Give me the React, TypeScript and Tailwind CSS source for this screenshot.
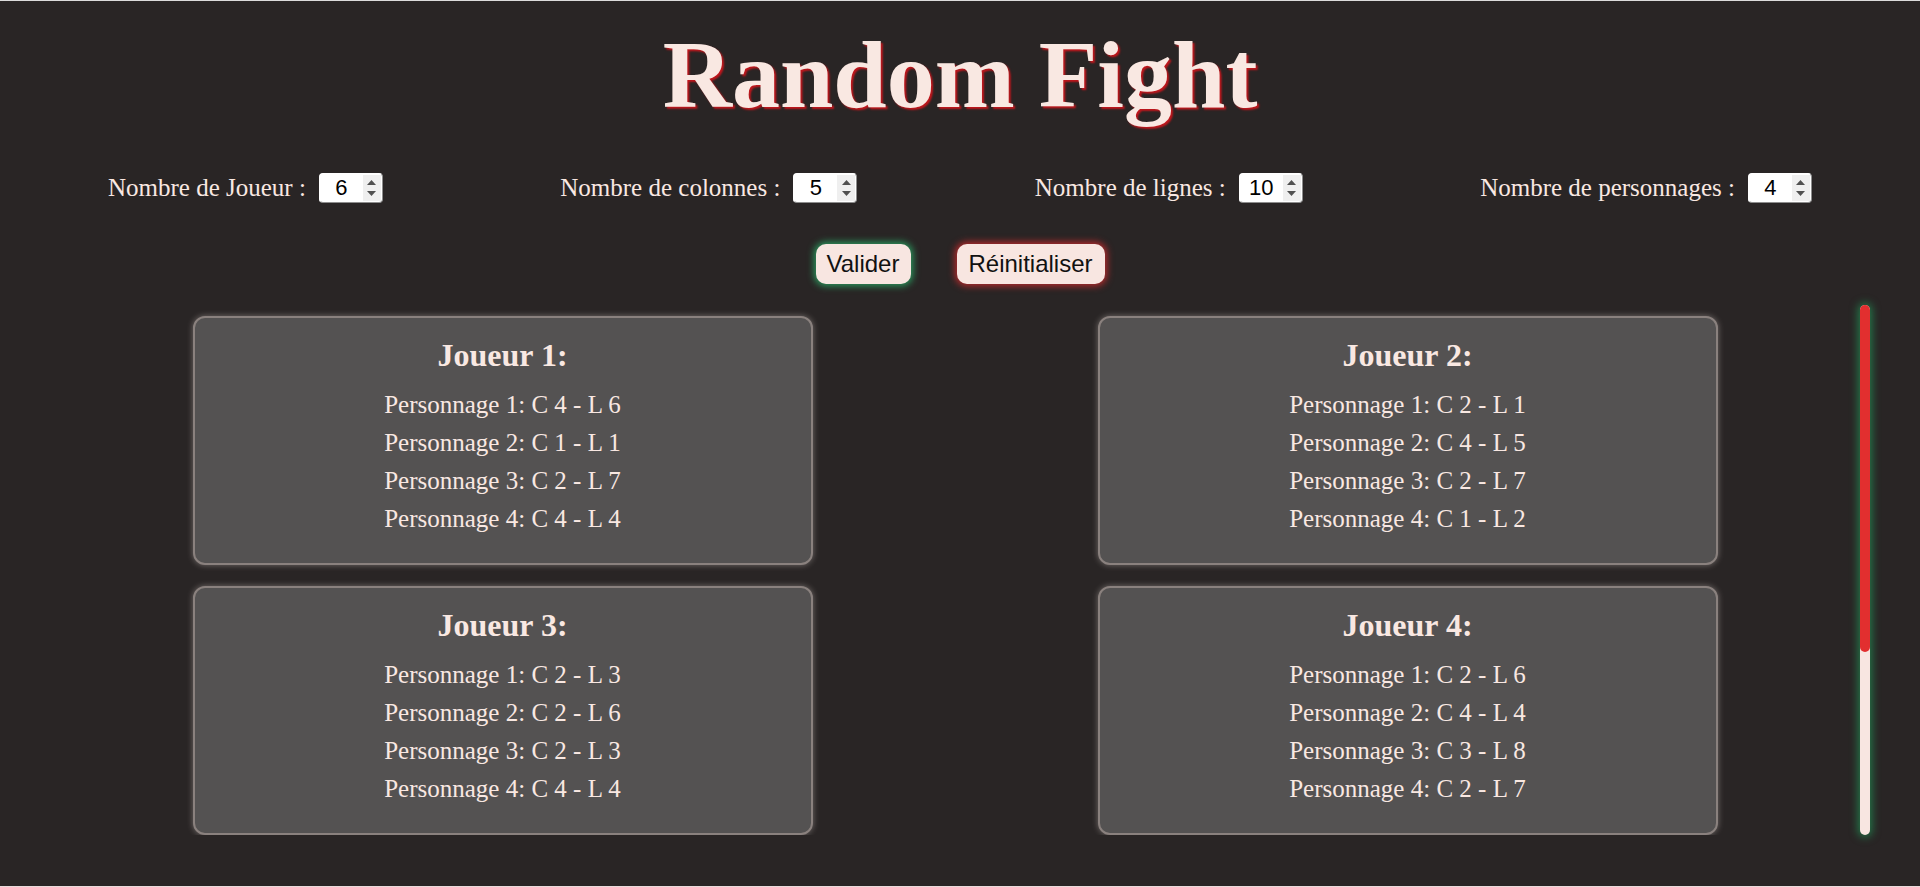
import React from "react";

const players: { name: string; chars: string[] }[] = [
  { name: "Joueur 1:", chars: ["C 4 - L 6", "C 1 - L 1", "C 2 - L 7", "C 4 - L 4"] },
  { name: "Joueur 2:", chars: ["C 2 - L 1", "C 4 - L 5", "C 2 - L 7", "C 1 - L 2"] },
  { name: "Joueur 3:", chars: ["C 2 - L 3", "C 2 - L 6", "C 2 - L 3", "C 4 - L 4"] },
  { name: "Joueur 4:", chars: ["C 2 - L 6", "C 4 - L 4", "C 3 - L 8", "C 2 - L 7"] },
];

function NumberBox({ value }: { value: string }) {
  return (
    <div className="flex h-[30px] w-[64px] items-stretch overflow-hidden rounded-[4px] border border-white border-r-[#8d8d8d] border-b-[#8d8d8d] bg-white">
      <div className="flex flex-1 items-center justify-center font-['Liberation_Sans',Arial,sans-serif] text-[22px] leading-none text-black">
        {value}
      </div>
      <div className="my-[1px] mr-[1px] flex w-[18px] flex-col items-center justify-center gap-[6px] bg-[#efefef]">
        <svg width="9" height="5" viewBox="0 0 9 5">
          <path d="M0 5 L4.5 0 L9 5 Z" fill="#505050" />
        </svg>
        <svg width="9" height="5" viewBox="0 0 9 5">
          <path d="M0 0 L9 0 L4.5 5 Z" fill="#505050" />
        </svg>
      </div>
    </div>
  );
}

function Field({ label, value }: { label: string; value: string }) {
  return (
    <div className="flex items-center gap-[13px]">
      <span className="text-[25px] leading-[28px]">{label}</span>
      <NumberBox value={value} />
    </div>
  );
}

function Card({ name, chars }: { name: string; chars: string[] }) {
  return (
    <div className="mx-auto flex h-[249px] w-[620px] flex-col items-center rounded-[12px] border-2 border-[#8a817e] bg-[#545252] pt-[19px] shadow-[0_0_6px_rgba(210,200,195,0.45)]">
      <h2 className="text-[32px] font-bold leading-[37px]">{name}</h2>
      <div className="mt-[12px] flex flex-col items-center">
        {chars.map((c, i) => (
          <p key={i} className="text-[25px] leading-[38px]">
            Personnage {i + 1}: {c}
          </p>
        ))}
      </div>
    </div>
  );
}

export default function App() {
  return (
    <div className="h-[887px] w-full overflow-hidden border-t border-b border-t-[#dcdcdc] border-b-[#eadada] bg-[#292525] font-['Liberation_Serif','Times_New_Roman',serif] text-[#f9e8e2]">
      <h1 className="mt-[19px] text-center text-[96px] font-bold leading-[110px] [text-shadow:2px_2px_2px_#c1161c]">
        Random Fight
      </h1>

      <div className="mt-[43px] flex h-[30px] items-center justify-between px-[108px]">
        <Field label="Nombre de Joueur :" value="6" />
        <Field label="Nombre de colonnes :" value="5" />
        <Field label="Nombre de lignes :" value="10" />
        <Field label="Nombre de personnages :" value="4" />
      </div>

      <div className="mt-[41px] flex justify-center gap-[46px] font-['Liberation_Sans',Arial,sans-serif]">
        <button className="h-[40px] w-[95px] rounded-[10px] bg-[#f8e6e1] text-[24px] leading-none text-[#111] shadow-[0_0_7px_2px_#2b9a5e]">
          Valider
        </button>
        <button className="h-[40px] w-[148px] rounded-[10px] bg-[#f8e6e1] text-[24px] leading-none text-[#111] shadow-[0_0_7px_2px_#b82a2c]">
          Réinitialiser
        </button>
      </div>

      <div className="ml-[50px] mt-[21px] flex h-[530px] w-[1820px]">
        <div className="h-full w-[1810px] overflow-hidden">
          <div className="grid grid-cols-2 gap-y-[21px] pt-[11px]">
            {players.map((p) => (
              <Card key={p.name} name={p.name} chars={p.chars} />
            ))}
          </div>
        </div>
        <div className="h-full w-[10px] rounded-full bg-[#f8e6e1] shadow-[0_0_8px_2px_#237a4a]">
          <div className="h-[347px] w-full rounded-full bg-[#e22f2f]" />
        </div>
      </div>
    </div>
  );
}
